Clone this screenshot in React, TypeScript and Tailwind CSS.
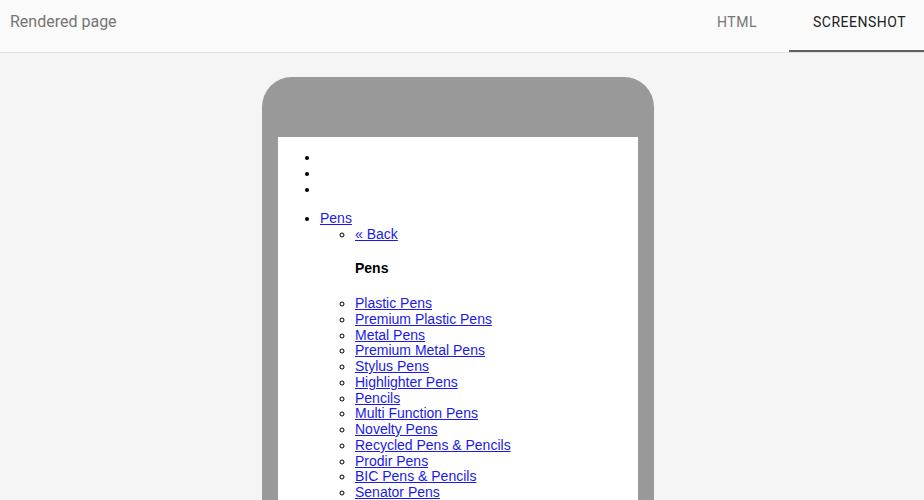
const links = [
  "Plastic Pens",
  "Premium Plastic Pens",
  "Metal Pens",
  "Premium Metal Pens",
  "Stylus Pens",
  "Highlighter Pens",
  "Pencils",
  "Multi Function Pens",
  "Novelty Pens",
  "Recycled Pens & Pencils",
  "Prodir Pens",
  "BIC Pens & Pencils",
  "Senator Pens",
];

const App = () => {
  return (
    <div className="h-[500px] overflow-hidden bg-[#f5f5f5] font-['Roboto',sans-serif]">
      {/* Header */}
      <div className="flex h-[53px] items-stretch justify-between border-b border-[#e0e0e0] bg-[#fafafa]">
        <div className="pl-[10px] pt-[10px] text-[16px] text-[#757575]">Rendered page</div>
        <div className="flex">
          <div className="flex w-[100px] justify-center pr-[4px] pt-[12px] text-[14px] tracking-[0.5px] text-[#757575]">
            HTML
          </div>
          <div className="flex w-[135px] justify-center border-b-2 border-[#616161] pl-[6px] pt-[12px] text-[14px] tracking-[0.5px] text-[#212121]">
            SCREENSHOT
          </div>
        </div>
      </div>

      {/* Phone */}
      <div className="flex justify-center pr-2 pt-[24px]">
        <div className="w-[392px] rounded-t-[30px] bg-[#999999] px-4 pt-[60px]">
          <div className="h-[400px] bg-white px-[8px] pt-[13px] font-['Liberation_Sans',Arial,sans-serif] text-[14px] leading-[15.75px] text-black">
            <ul className="mb-[14px] list-disc pl-[34px]">
              <li>&nbsp;</li>
              <li>&nbsp;</li>
              <li>&nbsp;</li>
            </ul>
            <ul className="list-disc pl-[34px]">
              <li>
                <a href="#" className="text-[#1a1ae6] underline">Pens</a>
                <ul className="list-[circle] pl-[35px]">
                  <li>
                    <a href="#" className="text-[#1a1ae6] underline">« Back</a>
                  </li>
                  <li className="list-none">
                    <h4 className="mb-[19px] mt-[18.5px] font-bold">Pens</h4>
                  </li>
                  {links.map((l) => (
                    <li key={l}>
                      <a href="#" className="text-[#1a1ae6] underline">{l}</a>
                    </li>
                  ))}
                </ul>
              </li>
            </ul>
          </div>
        </div>
      </div>
    </div>
  );
};

export default App;
